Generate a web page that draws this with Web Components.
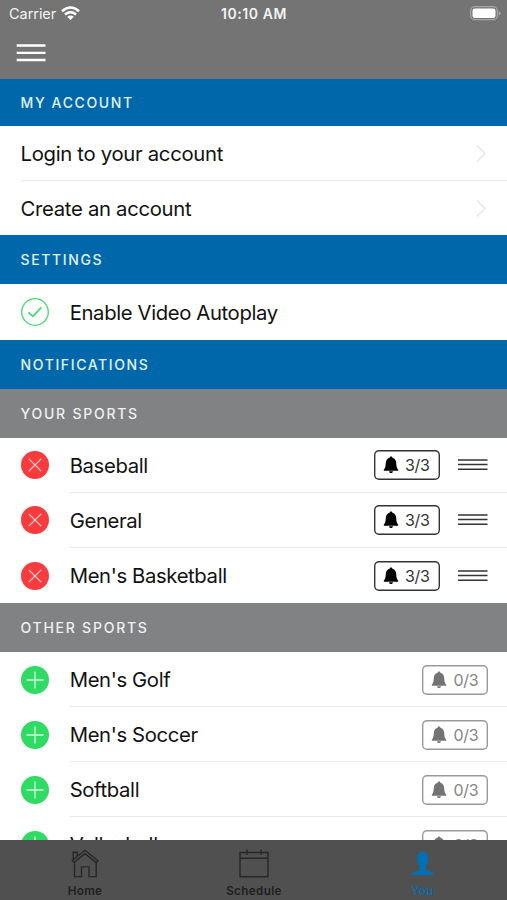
<!DOCTYPE html>
<html lang="en">
<head>
<meta charset="utf-8">
<title>My Account</title>
<style>
  body {
    margin: 0;
    font-family: Inter, "Liberation Sans", sans-serif;
    background: #fff;
  }
</style>
</head>
<body>
<account-screen>
  <status-bar slot="top" time="10:10 AM">Carrier</status-bar>
  <section-title first>MY ACCOUNT</section-title>
  <link-row>Login to your account</link-row>
  <link-row last>Create an account</link-row>
  <section-title>SETTINGS</section-title>
  <sport-row icon="check" last>Enable Video Autoplay</sport-row>
  <section-title>NOTIFICATIONS</section-title>
  <section-title muted>YOUR SPORTS</section-title>
  <sport-row icon="remove" count="3/3">Baseball</sport-row>
  <sport-row icon="remove" count="3/3">General</sport-row>
  <sport-row icon="remove" count="3/3" last>Men's Basketball</sport-row>
  <section-title muted>OTHER SPORTS</section-title>
  <sport-row icon="add" count="0/3">Men's Golf</sport-row>
  <sport-row icon="add" count="0/3">Men's Soccer</sport-row>
  <sport-row icon="add" count="0/3">Softball</sport-row>
  <sport-row icon="add" count="0/3">Volleyball</sport-row>
  <tab-bar slot="bottom">
    <tab-item icon="home">Home</tab-item>
    <tab-item icon="calendar">Schedule</tab-item>
    <tab-item icon="person" active>You</tab-item>
  </tab-bar>
</account-screen>

<script>
class AccountScreen extends HTMLElement {
  constructor() {
    super();
    this.attachShadow({ mode: 'open' });
  }

  connectedCallback() {
    this.shadowRoot.innerHTML = `
      <style>
        :host {
          display: flex;
          flex-direction: column;
          width: 507px;
          height: 900px;
          overflow: hidden;
        }
        main {
          flex: 1;
          min-height: 0;
          overflow: hidden;
        }
      </style>
      <slot name="top"></slot>
      <main><slot></slot></main>
      <slot name="bottom"></slot>
    `;
  }
}

class StatusBar extends HTMLElement {
  constructor() {
    super();
    this.attachShadow({ mode: 'open' });
  }

  connectedCallback() {
    this.shadowRoot.innerHTML = `
      <style>
        :host {
          display: block;
          flex: none;
          height: 79px;
          background: #747474;
          color: #f2f2f2;
        }
        .status {
          display: grid;
          grid-template-columns: 1fr auto 1fr;
          align-items: center;
          height: 27px;
          padding: 0 6px 0 9px;
          font-size: 14.5px;
        }
        .carrier {
          display: flex;
          align-items: center;
          gap: 5px;
          letter-spacing: -0.05px;
        }
        .time {
          margin-left: -2px;
          font-size: 14px;
          font-weight: 600;
          letter-spacing: 0.6px;
        }
        .battery { justify-self: end; }
        .menu { display: block; margin: 16px 0 0 16px; }
        svg { display: block; }
      </style>
      <div class="status">
        <span class="carrier"><slot></slot>
          <svg width="19" height="15" viewBox="0 0 19 15" fill="none" stroke="#fff" stroke-width="2.500">
            <path d="M1 5.3Q9.500-2.300 18 5.300M4 8.500Q9.500 3.700 15 8.500"/>
            <path d="M9.500 14L6.200 10.800Q9.500 8 12.800 10.800Z" fill="#fff" stroke="none"/>
          </svg>
        </span>
        <span class="time">${this.getAttribute('time')}</span>
        <svg class="battery" width="31" height="15" viewBox="0 0 31 15">
          <rect x="0.700" y="0.700" width="26.600" height="13" rx="4" fill="none" stroke="#a5a5a5" stroke-width="1.300"/>
          <rect x="2.500" y="2.500" width="23" height="9.400" rx="2.200" fill="#fff"/>
          <path d="M28.700 5v4.500q2-.7 2-2.250t-2-2.250z" fill="#a5a5a5"/>
        </svg>
      </div>
      <svg class="menu" width="30" height="20" viewBox="0 0 30 20" stroke="#fff" stroke-width="2.300">
        <path d="M.7 2.500h28.800M.7 9.800h28.800M.7 17h28.800"/>
      </svg>
    `;
  }
}

class SectionTitle extends HTMLElement {
  constructor() {
    super();
    this.attachShadow({ mode: 'open' });
  }

  connectedCallback() {
    this.shadowRoot.innerHTML = `
      <style>
        :host {
          display: flex;
          align-items: center;
          height: 49.1px;
          box-sizing: border-box;
          padding-left: 20.5px;
          background: #0068aa;
          color: #e2f1fb;
          font-size: 14px;
          font-weight: 500;
          letter-spacing: 1.62px;
        }
        :host([first]) {
          height: 47.4px;
        }
        :host([muted]) {
          background: #818284;
          color: #f0f0f0;
          letter-spacing: 1.75px;
        }
      </style>
      <slot></slot>
    `;
  }
}

class LinkRow extends HTMLElement {
  constructor() {
    super();
    this.attachShadow({ mode: 'open' });
  }

  connectedCallback() {
    this.shadowRoot.innerHTML = `
      <style>
        :host {
          display: flex;
          height: 54.5px;
          padding-left: 20.5px;
          background: #fff;
          font-size: 20.3px;
          letter-spacing: -0.3px;
          color: #111;
        }
        .body {
          flex: 1;
          display: flex;
          align-items: center;
          justify-content: space-between;
          padding: 1px 20px 0 0;
          border-bottom: 1px solid #e9e9eb;
        }
        :host([last]) .body { border-color: transparent; }
      </style>
      <div class="body">
        <slot></slot>
        <svg width="12" height="19" viewBox="0 0 12 19" fill="none" stroke="#e6e6f2" stroke-width="1.500">
          <path d="M2 1.500L10 9.500L2 17.500"/>
        </svg>
      </div>
    `;
  }
}

const ROW_ICONS = {
  check: `<circle cx="14" cy="14" r="13.300" fill="none" stroke="#3fd96b" stroke-width="1.300"/>
    <path d="M7.500 14.300L12 18.300L20.300 9.300" fill="none" stroke="#3fd96b" stroke-width="1.700"/>`,
  remove: `<circle cx="14" cy="14" r="14" fill="#f93b3d"/>
    <path d="M7.800 7.800L20.200 20.200M20.200 7.800L7.800 20.200" stroke="#ffd9d9" stroke-width="1.200"/>`,
  add: `<circle cx="14" cy="14" r="14" fill="#2fdb62"/>
    <path d="M14 5.500V22.500M5.500 14H22.500" stroke="#d5ffdf" stroke-width="1.300"/>`
};

class SportRow extends HTMLElement {
  constructor() {
    super();
    this.attachShadow({ mode: 'open' });
  }

  connectedCallback() {
    const icon = this.getAttribute('icon');
    const count = this.getAttribute('count');
    const grip = icon === 'remove' ? `
      <svg width="30" height="14" viewBox="0 0 30 14" stroke="#333" stroke-width="1.500">
        <path d="M0 2h29.500M0 6.500h29.500M0 11.200h29.500"/>
      </svg>` : '';

    this.shadowRoot.innerHTML = `
      <style>
        :host {
          display: flex;
          align-items: center;
          height: 55.1px;
          background: #fff;
          color: #111;
          font-size: 20.3px;
          letter-spacing: -0.37px;
        }
        .icon {
          flex: none;
          margin: 0 21px 0 20.7px;
        }
        .body {
          flex: 1;
          display: flex;
          align-items: center;
          height: 100%;
          box-sizing: border-box;
          padding: 1px 19px 0 0;
          border-bottom: 1px solid #e9e9eb;
        }
        :host([last]) .body { border-color: transparent; }
        .label { flex: 1; }
        .right {
          display: flex;
          align-items: center;
          gap: 18.5px;
        }
      </style>
      <svg class="icon" width="28" height="28" viewBox="0 0 28 28">${ROW_ICONS[icon]}</svg>
      <div class="body">
        <span class="label"><slot></slot></span>
        <span class="right">
          ${count ? `<count-badge ${icon === 'add' ? 'off' : ''}>${count}</count-badge>` : ''}
          ${grip}
        </span>
      </div>
    `;
  }
}

class CountBadge extends HTMLElement {
  constructor() {
    super();
    this.attachShadow({ mode: 'open' });
  }

  connectedCallback() {
    this.shadowRoot.innerHTML = `
      <style>
        :host {
          display: flex;
          align-items: center;
          width: 66px;
          height: 30px;
          box-sizing: border-box;
          border-radius: 5px;
          box-shadow: inset 0 0 0 1.4px #333;
          padding-left: 9px;
          gap: 6.5px;
          color: #333;
          font-size: 16px;
          letter-spacing: -0.3px;
          --bell: #000;
        }
        :host([off]) {
          box-shadow: inset 0 0 0 1.4px #999;
          color: #858585;
          --bell: #737373;
        }
      </style>
      <svg width="16" height="18" viewBox="0 0 16 18" fill="var(--bell)">
        <path d="M8 .5c.8 0 1.300.5 1.400 1.300C12 2.500 13.100 4.600 13.200 7c.1 3.500.6 5.200 2 6.800v.9H.8v-.9c1.400-1.600 1.900-3.300 2-6.800C2.900 4.600 4 2.500 6.600 1.800 6.700 1 7.200.5 8 .5z"/>
        <path d="M6 15.200h4c-.2 1.200-.9 1.900-2 1.900s-1.800-.7-2-1.900z"/>
      </svg>
      <slot></slot>
    `;
  }
}

class TabBar extends HTMLElement {
  constructor() {
    super();
    this.attachShadow({ mode: 'open' });
  }

  connectedCallback() {
    this.shadowRoot.innerHTML = `
      <style>
        :host {
          display: grid;
          grid-template-columns: 170px 168px 169px;
          flex: none;
          height: 60px;
          background: #505050;
        }
      </style>
      <slot></slot>
    `;
  }
}

const TAB_ICONS = {
  home: `<g fill="none" stroke="#272727" stroke-width="1.400">
      <path d="M4.200 14.300L2.300 12.500L15 2.300L28 12.700L26.300 14.500L15 5.600Z"/>
      <path d="M4.500 14V28.600H11.500V18.900H19V28.600H26.200V14.200"/>
      <path d="M3.200 11.700V4.300H7.200V8.300"/>
    </g>`,
  calendar: `<g fill="none" stroke="#272727" stroke-width="1.400">
      <path d="M1 4.500H29V28.700H1ZM1 10.300H29M8 1.500V7M22 1.500V7"/>
    </g>`,
  person: `<path fill="#0070b5" d="M14.700 3.700c3.600 0 5.600 2.700 5.600 6.900 0 3.700-1 6-2.500 7.900v2.300c0 1.600 1.200 2.100 4 2.700 2.700.6 4.100 1.500 4.300 3.500H3.400c.2-2 1.700-2.900 4.400-3.500 2.800-.6 4-1.100 4-2.700v-2.300c-1.500-1.900-2.600-4.200-2.600-7.900 0-4.200 2-6.900 5.500-6.900z"/>`
};

class TabItem extends HTMLElement {
  constructor() {
    super();
    this.attachShadow({ mode: 'open' });
  }

  connectedCallback() {
    this.shadowRoot.innerHTML = `
      <style>
        :host {
          display: flex;
          flex-direction: column;
          align-items: center;
          padding-top: 8px;
          color: #1f1f1f;
          font-size: 11.7px;
          font-weight: 600;
          line-height: 14px;
          letter-spacing: 0.35px;
        }
        :host([active]) {
          color: #0070b5;
          font-weight: 500;
        }
        svg { margin-bottom: 5px; }
      </style>
      <svg width="30" height="31" viewBox="0 0 30 31">${TAB_ICONS[this.getAttribute('icon')]}</svg>
      <slot></slot>
    `;
  }
}

customElements.define('account-screen', AccountScreen);
customElements.define('status-bar', StatusBar);
customElements.define('section-title', SectionTitle);
customElements.define('link-row', LinkRow);
customElements.define('count-badge', CountBadge);
customElements.define('sport-row', SportRow);
customElements.define('tab-bar', TabBar);
customElements.define('tab-item', TabItem);
</script>
</body>
</html>
